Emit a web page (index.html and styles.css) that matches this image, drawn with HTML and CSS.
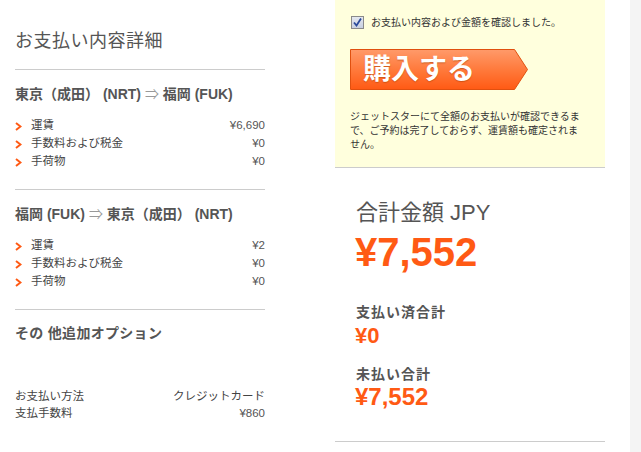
FILE: index.html
```html
<!DOCTYPE html>
<html lang="ja">
<head>
<meta charset="utf-8">
<link rel="stylesheet" href="styles.css">
</head>
<body>
<div class="page">
  <div class="left">
    <h1 class="title">お支払い内容詳細</h1>

    <div class="section">
      <h2 class="route">東京（成田） (NRT) <span class="arrow">⇒</span> 福岡 (FUK)</h2>
      <div class="rows">
        <div class="row"><span class="label"><svg class="chev" viewBox="0 0 7 9"><path d="M1 1 L5.5 4.5 L1 8" fill="none" stroke="#ff5a14" stroke-width="2"/></svg>運賃</span><span class="val">¥6,690</span></div>
        <div class="row"><span class="label"><svg class="chev" viewBox="0 0 7 9"><path d="M1 1 L5.5 4.5 L1 8" fill="none" stroke="#ff5a14" stroke-width="2"/></svg>手数料および税金</span><span class="val">¥0</span></div>
        <div class="row"><span class="label"><svg class="chev" viewBox="0 0 7 9"><path d="M1 1 L5.5 4.5 L1 8" fill="none" stroke="#ff5a14" stroke-width="2"/></svg>手荷物</span><span class="val">¥0</span></div>
      </div>
    </div>

    <div class="section">
      <h2 class="route">福岡 (FUK) <span class="arrow">⇒</span> 東京（成田） (NRT)</h2>
      <div class="rows">
        <div class="row"><span class="label"><svg class="chev" viewBox="0 0 7 9"><path d="M1 1 L5.5 4.5 L1 8" fill="none" stroke="#ff5a14" stroke-width="2"/></svg>運賃</span><span class="val">¥2</span></div>
        <div class="row"><span class="label"><svg class="chev" viewBox="0 0 7 9"><path d="M1 1 L5.5 4.5 L1 8" fill="none" stroke="#ff5a14" stroke-width="2"/></svg>手数料および税金</span><span class="val">¥0</span></div>
        <div class="row"><span class="label"><svg class="chev" viewBox="0 0 7 9"><path d="M1 1 L5.5 4.5 L1 8" fill="none" stroke="#ff5a14" stroke-width="2"/></svg>手荷物</span><span class="val">¥0</span></div>
      </div>
    </div>

    <div class="options">
      <h2 class="route opt">その 他追加オプション</h2>
      <div class="pay">
        <div class="prow"><span>お支払い方法</span><span>クレジットカード</span></div>
        <div class="prow"><span>支払手数料</span><span class="val">¥860</span></div>
      </div>
    </div>
  </div>

  <div class="right">
    <div class="confirm">
      <div class="check-row">
        <span class="checkbox"><svg viewBox="0 0 9 9" width="9" height="9"><path d="M1 4.5 L3.5 7.5 L8 0.5" fill="none" stroke="#2a4a9a" stroke-width="1.8"/></svg></span>
        <span class="check-text">お支払い内容および金額を確認しました。</span>
      </div>
      <div class="buy">
        <svg class="buy-bg" viewBox="0 0 178 41" width="178" height="41">
          <defs>
            <linearGradient id="g" x1="0" y1="0" x2="0" y2="1">
              <stop offset="0" stop-color="#ff9a6a"/>
              <stop offset="0.5" stop-color="#ff7a3c"/>
              <stop offset="1" stop-color="#ff5a14"/>
            </linearGradient>
          </defs>
          <polygon points="0.5,0.5 164.5,0.5 177.5,20.5 164.5,40.5 0.5,40.5" fill="url(#g)" stroke="#e0500f" stroke-width="1"/>
        </svg>
        <span class="buy-text">購入する</span>
      </div>
      <p class="note">ジェットスターにて全額のお支払いが確認できるま<br>で、ご予約は完了しておらず、運賃額も確定されま<br>せん。</p>
    </div>

    <div class="totals">
      <div class="total-label">合計金額 JPY</div>
      <div class="total-amount">¥7,552</div>
      <div class="sub-label">支払い済合計</div>
      <div class="sub-amount">¥0</div>
      <div class="sub-label second">未払い合計</div>
      <div class="sub-amount big">¥7,552</div>
    </div>
  </div>

  <div class="strip"></div>
</div>
</body>
</html>
```

FILE: styles.css
```css
html, body {
  margin: 0;
  padding: 0;
  background: #fff;
}
body {
  font-family: "Liberation Sans", "Noto Sans CJK JP", sans-serif;
  color: #444;
}
.page {
  display: flex;
  height: 452px;
  overflow: hidden;
}
.left {
  width: 250px;
  margin-left: 15px;
  flex: none;
}
.title {
  margin: 0;
  padding-top: 29px;
  padding-bottom: 16px;
  font-size: 18px;
  line-height: 24px;
  font-weight: normal;
  color: #555;
  letter-spacing: 0.5px;
  border-bottom: 1px solid #ccc;
}
.section {
  border-bottom: 1px solid #ccc;
  padding-bottom: 19px;
}
.route {
  margin: 14px 0 0;
  font-size: 14px;
  line-height: 20px;
  font-weight: bold;
  color: #555;
}
.arrow {
  color: #999;
  font-weight: normal;
}
.rows {
  margin-top: 12px;
}
.row, .prow {
  display: flex;
  justify-content: space-between;
  font-size: 11.5px;
  line-height: 18px;
  color: #444;
}
.label {
  display: flex;
  align-items: center;
}
.chev {
  width: 7px;
  height: 9px;
  margin-right: 9px;
  margin-top: 2px;
}
.val {
  color: #555;
}
.opt {
  margin-top: 13px;
  letter-spacing: 0.3px;
}
.pay {
  margin-top: 45px;
}
.prow {
  line-height: 17px;
}

.right {
  width: 270px;
  margin-left: 70px;
  flex: none;
}
.confirm {
  background: #ffffdd;
  border-bottom: 1px solid #ccc;
  padding: 16px 15px 15px;
  height: 136px;
}
.check-row {
  display: flex;
  align-items: center;
  height: 13px;
}
.checkbox {
  width: 11px;
  height: 11px;
  margin-left: 1px;
  border: 1px solid #8a8a8a;
  background: linear-gradient(#e4e8f0, #c8d0e0);
  display: flex;
  align-items: center;
  justify-content: center;
}
.check-text {
  margin-left: 7px;
  font-size: 10px;
  line-height: 13px;
  color: #333;
}
.buy {
  position: relative;
  width: 178px;
  height: 41px;
  margin-top: 20px;
  display: flex;
  align-items: center;
}
.buy-bg {
  position: absolute;
  left: 0;
  top: 0;
}
.buy-text {
  position: relative;
  margin-left: 13px;
  font-size: 28px;
  font-weight: bold;
  color: #fff;
  line-height: 41px;
  letter-spacing: 0;
  text-shadow: 0 1px 1px rgba(160, 60, 0, 0.5);
}
.note {
  margin: 20px 0 0;
  font-size: 10px;
  line-height: 14px;
  color: #333;
}

.totals {
  padding-left: 21px;
  padding-bottom: 30px;
  border-bottom: 1px solid #ccc;
}
.total-label {
  margin-top: 31px;
  font-size: 22px;
  line-height: 28px;
  color: #555;
}
.total-amount {
  margin-top: 2px;
  margin-left: -1px;
  font-size: 40px;
  line-height: 46px;
  font-weight: bold;
  color: #ff5a14;
}
.sub-label {
  margin-top: 28px;
  font-size: 14px;
  line-height: 18px;
  font-weight: bold;
  color: #555;
  letter-spacing: 1px;
}
.sub-label.second {
  margin-top: 16px;
}
.sub-amount {
  margin-top: 2px;
  margin-left: -1px;
  font-size: 22px;
  line-height: 26px;
  font-weight: bold;
  color: #ff5a14;
}
.sub-amount.big {
  margin-top: 0;
  font-size: 24px;
  line-height: 28px;
}
.strip {
  flex: none;
  width: 11px;
  margin-left: 25px;
  background: #f4f4f4;
}
```
